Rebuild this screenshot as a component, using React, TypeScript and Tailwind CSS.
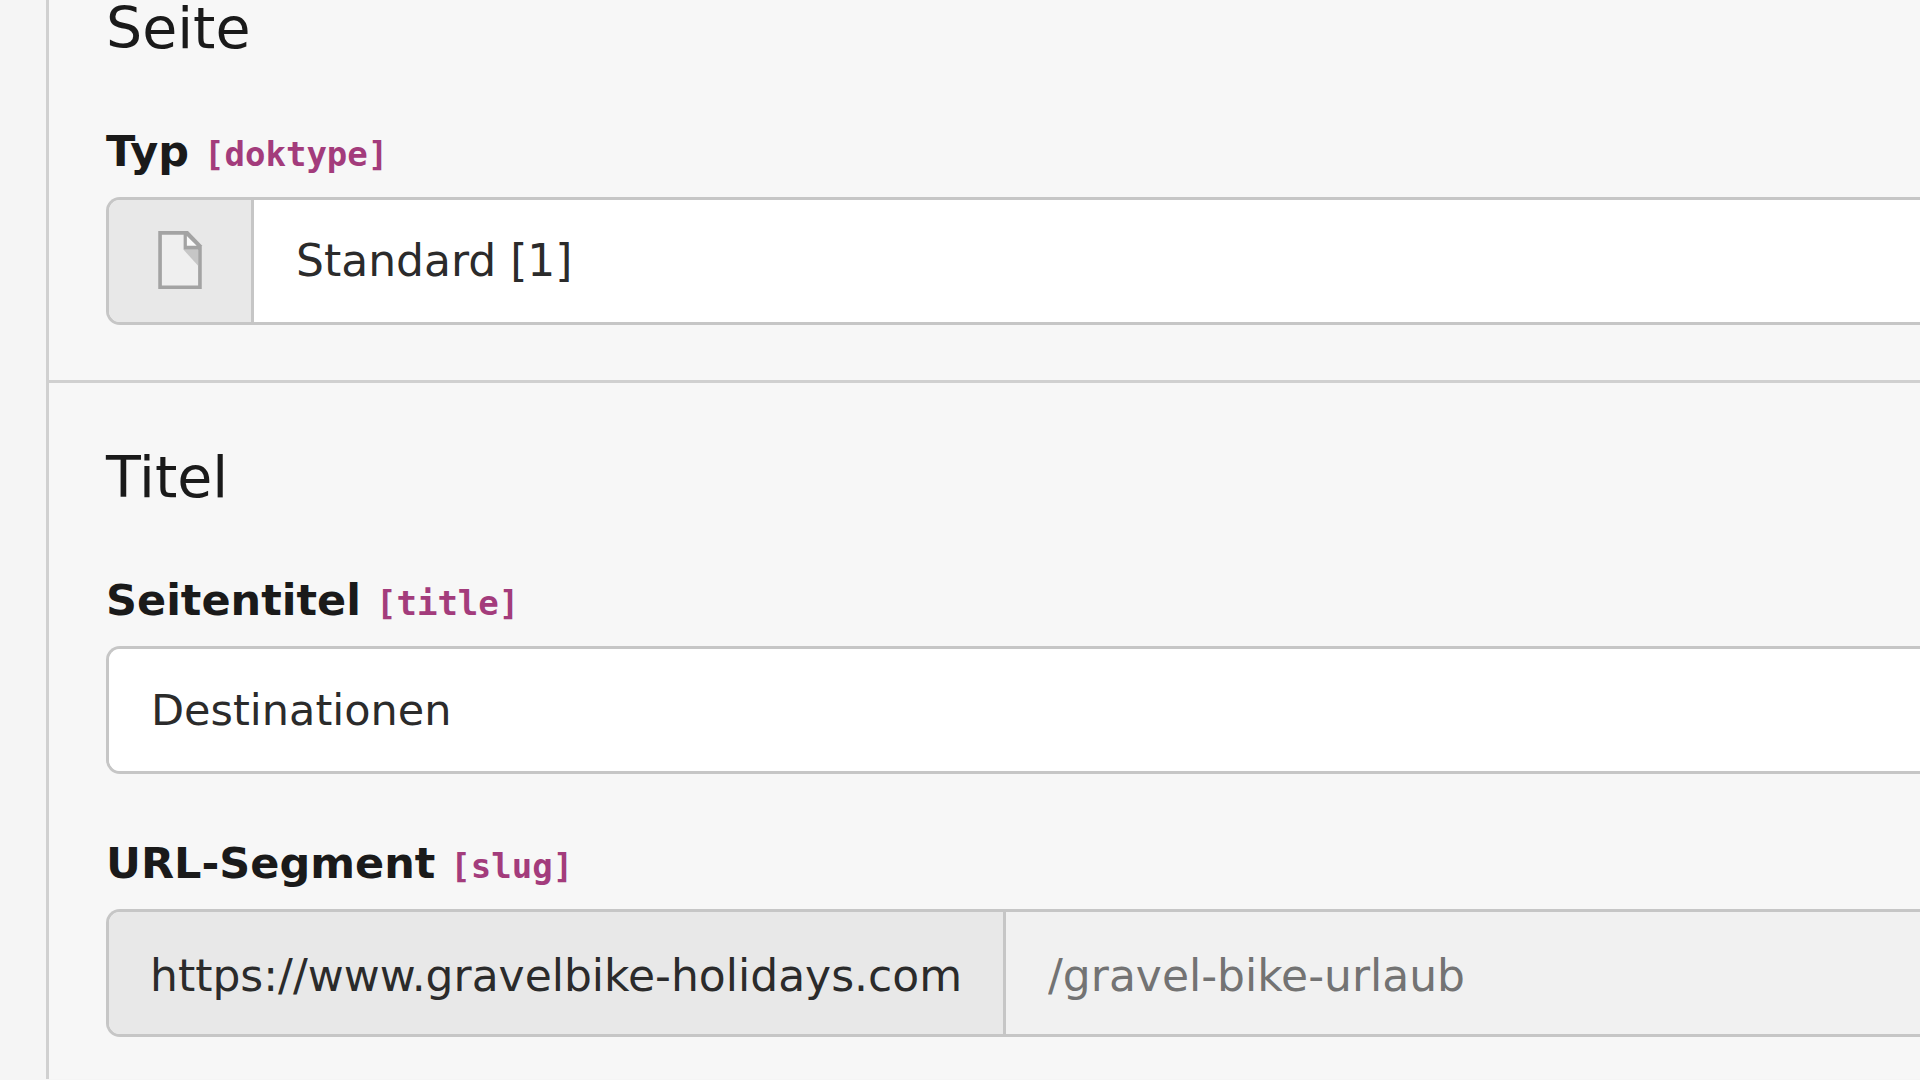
import type { ReactNode } from 'react';

const fieldBox = 'flex h-[128px] overflow-hidden rounded-l-[14px] border-[3px] border-r-0 border-[#c6c6c6]';
const addon = 'flex shrink-0 items-center border-r-[3px] border-[#c6c6c6] bg-[#e8e8e8]';

function PageIcon() {
  return (
    <svg viewBox="0 0 16 16" className="mb-0.5 size-[58px]" aria-hidden="true">
      <path fill="#a3a3a3" d="M2 0h8.2L14 3.9V16H2z" />
      <path fill="#efefef" d="M3 1h6v4.2h4V15H3z" />
      <path fill="#fafafa" d="M9.9 1.4v2.7h2.7z" />
      <path fill="#c6c6c6" d="M9 5.2h4v4.4z" />
    </svg>
  );
}

function SectionTitle({ children }: { children: ReactNode }) {
  return <h2 className="mb-[70px] text-[57px] leading-[58px]">{children}</h2>;
}

function FieldLabel({ id, name, children }: { id: string; name: string; children: ReactNode }) {
  return (
    <label htmlFor={id} className="mb-[22px] block text-[43px] leading-[48px] font-bold">
      {children}{' '}
      <code className="font-['DejaVu_Sans_Mono',monospace] text-[34px] leading-none text-[#a33c7c]">[{name}]</code>
    </label>
  );
}

export default function App() {
  return (
    <div className="min-h-screen overflow-hidden bg-[#f5f5f5] pl-[46px] font-['DejaVu_Sans',Verdana,sans-serif] text-[#1a1a1a]">
      <form className="min-h-screen border-l-[3px] border-[#d0d0d0] bg-[#f7f7f7]">
        {/* Page type */}
        <section className="-mt-px border-b-[3px] border-[#d0d0d0] pb-[55px] pl-[57px]">
          <SectionTitle>Seite</SectionTitle>
          <FieldLabel id="doktype" name="doktype">Typ</FieldLabel>
          <div className={fieldBox}>
            <span className={`${addon} w-[145px] justify-center`}>
              <PageIcon />
            </span>
            <select
              id="doktype"
              defaultValue="1"
              className="min-w-0 flex-1 appearance-none bg-white px-[42px] text-[44px] text-[#2b2b2b] outline-none"
            >
              <option value="1">Standard [1]</option>
            </select>
          </div>
        </section>

        {/* Title and slug */}
        <section className="pt-[65px] pl-[57px]">
          <SectionTitle>Titel</SectionTitle>
          <FieldLabel id="title" name="title">Seitentitel</FieldLabel>
          <div className={fieldBox}>
            <input
              id="title"
              type="text"
              defaultValue="Destinationen"
              className="min-w-0 flex-1 bg-white px-[42px] text-[43px] text-[#2b2b2b] outline-none"
            />
          </div>

          <div className="pt-[65px]">
            <FieldLabel id="slug" name="slug">URL-Segment</FieldLabel>
            <div className={fieldBox}>
              <span className={`${addon} px-[41px] pt-1.5 text-[44px] text-[#2b2b2b]`}>
                https://www.gravelbike-holidays.com
              </span>
              <input
                id="slug"
                type="text"
                readOnly
                defaultValue="/gravel-bike-urlaub"
                className="min-w-0 flex-1 bg-[#f1f1f1] px-[42px] pt-1.5 text-[44px] text-[#737373] outline-none"
              />
            </div>
          </div>
        </section>
      </form>
    </div>
  );
}
